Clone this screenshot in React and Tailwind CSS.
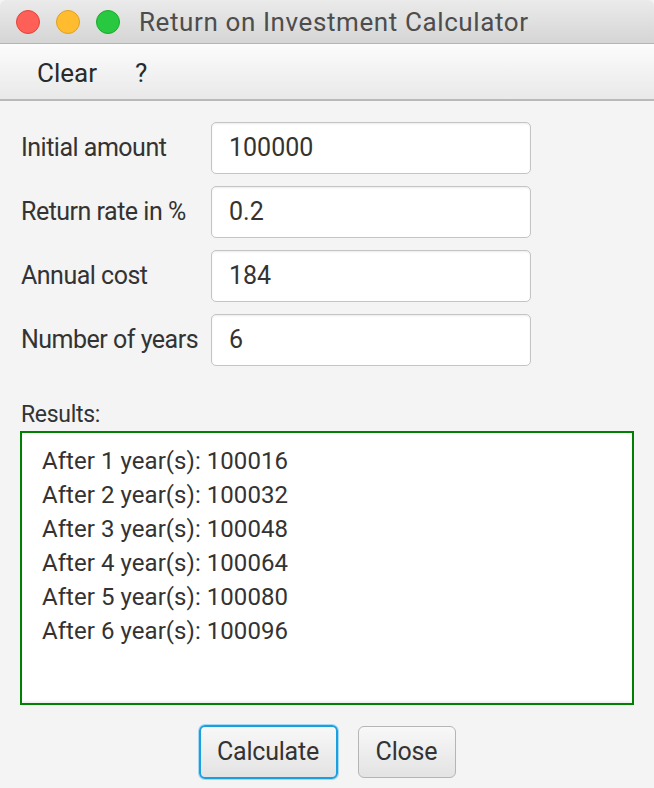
import { useState } from "react"

const fields = [
  { label: "Initial amount", value: "100000" },
  { label: "Return rate in %", value: "0.2" },
  { label: "Annual cost", value: "184" },
  { label: "Number of years", value: "6" },
]

const results = [
  "After 1 year(s): 100016",
  "After 2 year(s): 100032",
  "After 3 year(s): 100048",
  "After 4 year(s): 100064",
  "After 5 year(s): 100080",
  "After 6 year(s): 100096",
]

export default function App() {
  const [values] = useState(fields)

  return (
    <div
      className="w-[654px] h-[788px] bg-[#f4f4f4] flex flex-col overflow-hidden text-[#333333]"
      style={{ fontFamily: "Roboto, 'Noto Sans', sans-serif" }}
    >
      {/* Title bar */}
      <div className="h-[44px] shrink-0 flex items-center bg-gradient-to-b from-[#ebebeb] to-[#d5d5d5] border-b border-[#b5b5b5] rounded-t-[6px]">
        <div className="flex items-center gap-[16px] pl-[16px]">
          <span className="w-[24px] h-[24px] rounded-full bg-[#fe5f57] border border-[#e0443e]" />
          <span className="w-[24px] h-[24px] rounded-full bg-[#febc2e] border border-[#dea123]" />
          <span className="w-[24px] h-[24px] rounded-full bg-[#28c840] border border-[#1aab29]" />
        </div>
        <span className="ml-[19px] pt-[1px] text-[26px] text-[#4d4d4d] tracking-[0.6px]">
          Return on Investment Calculator
        </span>
      </div>

      {/* Menu bar */}
      <div className="h-[57px] shrink-0 flex items-center gap-[38px] pl-[37px] pt-[4px] bg-gradient-to-b from-[#fcfcfc] to-[#e9e9e9] border-b-2 border-[#b9b9b9] text-[26px] text-[#2a2a2a]">
        <span>Clear</span>
        <span>?</span>
      </div>

      {/* Form */}
      <div className="flex flex-col gap-[12px] pl-[21px] pt-[21px]">
        {values.map((f) => (
          <div key={f.label} className="flex items-center">
            <span className="w-[190px] text-[25px] tracking-[-0.5px] whitespace-nowrap">{f.label}</span>
            <div className="w-[320px] h-[52px] flex items-center pl-[17px] bg-white border border-[#c4c4c4] rounded-[5px] shadow-[inset_0_1px_2px_rgba(0,0,0,0.08)] text-[25px]">
              {f.value}
            </div>
          </div>
        ))}
      </div>

      {/* Results */}
      <div className="px-[20px] pt-[36px]">
        <div className="pl-[1px] text-[23px] tracking-[-0.3px] leading-[26px]">Results:</div>
        <div className="mt-[3px] h-[274px] bg-white border-2 border-[#008000] pl-[20px] pt-[11px] shadow-[inset_0_-2px_2px_rgba(0,0,0,0.06)]">
          {results.map((r) => (
            <div key={r} className="text-[24px] leading-[34px] tracking-[0.05px] whitespace-nowrap">
              {r}
            </div>
          ))}
        </div>
      </div>

      {/* Buttons */}
      <div className="flex justify-center items-center gap-[20px] pt-[20px]">
        <button className="w-[139px] h-[54px] rounded-[6px] bg-gradient-to-b from-[#f8f8f8] to-[#e3e3e3] border-2 border-[#1aa0e0] shadow-[0_0_0_1px_#a8d8f0] text-[25px] tracking-[-0.2px] text-[#333333]">
          Calculate
        </button>
        <button className="w-[98px] h-[52px] rounded-[6px] bg-gradient-to-b from-[#f8f8f8] to-[#e3e3e3] border border-[#b5b5b5] text-[25px] tracking-[-0.2px] text-[#333333]">
          Close
        </button>
      </div>
    </div>
  )
}
